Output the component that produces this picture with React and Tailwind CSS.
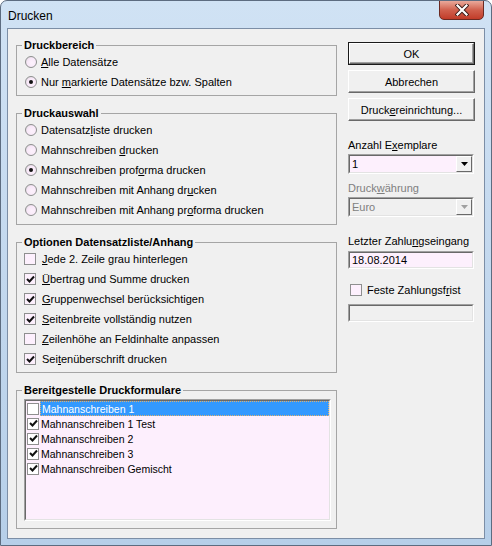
import React from "react";

function U({ children }) {
  return <span className="underline underline-offset-[1px]">{children}</span>;
}

function Tick({ size = 9 }) {
  return (
    <svg width={size} height={size} viewBox="0 0 9 9">
      <path d="M1 4 L3.5 6.5 L8 1.5" fill="none" stroke="#111" strokeWidth="2" />
    </svg>
  );
}

function Radio({ checked, children }) {
  return (
    <div className="flex h-[20px] items-center">
      <span className="flex h-[12px] w-[12px] items-center justify-center rounded-full border border-[#8e8f8f] bg-[radial-gradient(circle_at_60%_60%,#fdf2fd_0%,#f8e8f8_55%,#cfcfcf_100%)]">
        {checked && <span className="h-[4px] w-[4px] rounded-full bg-[#111]" />}
      </span>
      <span className="ml-[4px]">{children}</span>
    </div>
  );
}

function Check({ checked, children }) {
  return (
    <div className="flex h-[20px] items-center">
      <span className="flex h-[12px] w-[12px] items-center justify-center border border-[#8e8f8f] bg-[#fdf0fd]">
        {checked && <Tick />}
      </span>
      <span className="ml-[6px]">{children}</span>
    </div>
  );
}

function Group({ title, className = "", children }) {
  return (
    <fieldset className={`border border-[#a5a5a5] pb-[3px] ${className}`}>
      <legend className="ml-[5px] px-[2px] text-[11px] font-bold leading-[14px]">{title}</legend>
      {children}
    </fieldset>
  );
}

function Button({ primary, children }) {
  return (
    <div className={`h-[23px] ${primary ? "border border-[#1a1a1a]" : ""}`}>
      <div className="flex h-full w-full items-center justify-center border border-t-white border-l-white border-r-[#696969] border-b-[#696969] bg-[#f0f0f0] shadow-[inset_-1px_-1px_0_#a0a0a0]">
        {children}
      </div>
    </div>
  );
}

function Inset({ className = "", children }) {
  return (
    <div className={`border border-t-[#a0a0a0] border-l-[#a0a0a0] border-r-white border-b-white ${className}`}>
      <div className="h-full w-full border border-t-[#696969] border-l-[#696969] border-r-[#e3e3e3] border-b-[#e3e3e3]">
        {children}
      </div>
    </div>
  );
}

function Combo({ value, disabled }) {
  return (
    <Inset className="h-[20px]">
      <div className={`flex h-full items-center ${disabled ? "bg-[#f0f0f0] text-[#7f7f7f]" : "bg-[#fdf0fd]"}`}>
        <span className="flex-1 pl-[2px]">{value}</span>
        <span className="flex h-full w-[16px] items-center justify-center border border-t-white border-l-white border-r-[#696969] border-b-[#696969] bg-[#f0f0f0]">
          <svg width="7" height="4" viewBox="0 0 7 4">
            <path d="M0 0 H7 L3.5 4 Z" fill={disabled ? "#a0a0a0" : "#000"} />
          </svg>
        </span>
      </div>
    </Inset>
  );
}

const forms = [
  { name: "Mahnanschreiben 1", checked: false, selected: true },
  { name: "Mahnanschreiben 1 Test", checked: true },
  { name: "Mahnanschreiben 2", checked: true },
  { name: "Mahnanschreiben 3", checked: true },
  { name: "Mahnanschreiben Gemischt", checked: true },
];

export default function App() {
  return (
    <div className="relative h-[546px] w-[492px] overflow-hidden rounded-t-[7px] border border-[#5d6c80] bg-gradient-to-b from-[#d0e2f4] via-[#c3d8ee] to-[#b6cfe9] px-[6px] pb-[7px] pt-[27px] font-['Liberation_Sans',Arial,sans-serif] text-black">
      {/* title bar */}
      <div className="absolute left-[7px] top-[8px] text-[12px] leading-[14px]">Drucken</div>
      <div className="absolute right-[7px] top-[-1px] flex h-[20px] w-[45px] items-center justify-center rounded-b-[5px] border border-[#6b2a22] bg-gradient-to-b from-[#e9a99b] via-[#d0604d] to-[#c13b28]">
        <svg width="14" height="12" viewBox="0 0 14 12">
          <path d="M2.5 1.5 L11.5 10.5 M11.5 1.5 L2.5 10.5" stroke="#3a1a16" strokeWidth="4" strokeLinecap="square" />
          <path d="M2.5 1.5 L11.5 10.5 M11.5 1.5 L2.5 10.5" stroke="#fff" strokeWidth="2.2" strokeLinecap="square" />
        </svg>
      </div>

      {/* client area */}
      <div className="flex h-[511px] w-[478px] border border-[#7c8ea6] bg-[#f0f0f0] text-[11px] leading-[14px]">
        {/* left column */}
        <div className="ml-[8px] mt-[9px] flex w-[321px] flex-col">
          <Group title="Druckbereich">
            <div className="ml-[8px]">
              <Radio><U>A</U>lle Datensätze</Radio>
              <Radio checked>Nur <U>m</U>arkierte Datensätze bzw. Spalten</Radio>
            </div>
          </Group>

          <Group title="Druckauswahl" className="mt-[10px] pb-[4px]">
            <div className="ml-[8px]">
              <Radio>Datensatz<U>l</U>iste drucken</Radio>
              <Radio>Mahnschreiben <U>d</U>rucken</Radio>
              <Radio checked>Mahnschreiben prof<U>o</U>rma drucken</Radio>
              <Radio>Mahnschreiben mit Anhang dr<U>u</U>cken</Radio>
              <Radio>Mahnschreiben mit Anhang pr<U>o</U>forma drucken</Radio>
            </div>
          </Group>

          <Group title="Optionen Datensatzliste/Anhang" className="mt-[10px]">
            <div className="ml-[7px]">
              <Check><U>J</U>ede 2. Zeile grau hinterlegen</Check>
              <Check checked><U>Ü</U>bertrag und Summe drucken</Check>
              <Check checked><U>G</U>ruppenwechsel berücksichtigen</Check>
              <Check checked><U>S</U>eitenbreite vollständig nutzen</Check>
              <Check><U>Z</U>eilenhöhe an Feldinhalte anpassen</Check>
              <Check checked>Sei<U>t</U>enüberschrift drucken</Check>
            </div>
          </Group>

          <Group title="Bereitgestelle Druckformulare" className="mt-[10px] pb-[7px]">
            <Inset className="ml-[7px] mr-[5px] mt-[2px] h-[122px]">
              <div className="h-full bg-[#fdeffd] text-[10.5px]">
                {forms.map((f) => (
                  <div key={f.name} className="flex h-[15px] items-center">
                    <span className="ml-[1px] flex h-[12px] w-[12px] items-center justify-center border border-[#8f8f8f] bg-white">
                      {f.checked && <Tick />}
                    </span>
                    <span
                      className={`ml-[1px] flex h-full flex-1 items-center pl-[1px] ${
                        f.selected ? "border border-dotted border-[#e0b070] bg-[#3399ff] text-white" : ""
                      }`}
                    >
                      {f.name}
                    </span>
                  </div>
                ))}
              </div>
            </Inset>
          </Group>
        </div>

        {/* right column */}
        <div className="ml-[11px] mt-[13px] flex w-[127px] flex-col">
          <Button primary>OK</Button>
          <div className="mt-[5px]">
            <Button>Abbrechen</Button>
          </div>
          <div className="mt-[5px]">
            <Button>Druck<U>e</U>reinrichtung...</Button>
          </div>

          <div className="mt-[17px]">Anzahl E<U>x</U>emplare</div>
          <div className="mt-[2px] w-[126px]">
            <Combo value="1" />
          </div>

          <div className="mt-[7px] text-[#7f7f7f]">Druck<U>w</U>ährung</div>
          <div className="mt-[2px] w-[126px]">
            <Combo value="Euro" disabled />
          </div>

          <div className="mt-[17px]">Letzter Zahlu<U>n</U>gseingang</div>
          <Inset className="mt-[3px] h-[18px] w-[126px]">
            <div className="flex h-full items-center bg-[#fdf0fd] pl-[2px]">18.08.2014</div>
          </Inset>

          <div className="mt-[13px] flex h-[16px] items-center pl-[2px]">
            <span className="h-[12px] w-[12px] border border-[#8e8f8f] bg-[#fdf0fd]" />
            <span className="ml-[5px]">Feste Zahlungsf<U>r</U>ist</span>
          </div>
          <Inset className="mt-[6px] h-[18px] w-[126px]">
            <div className="h-full bg-[#f0f0f0]" />
          </Inset>
        </div>
      </div>
    </div>
  );
}
